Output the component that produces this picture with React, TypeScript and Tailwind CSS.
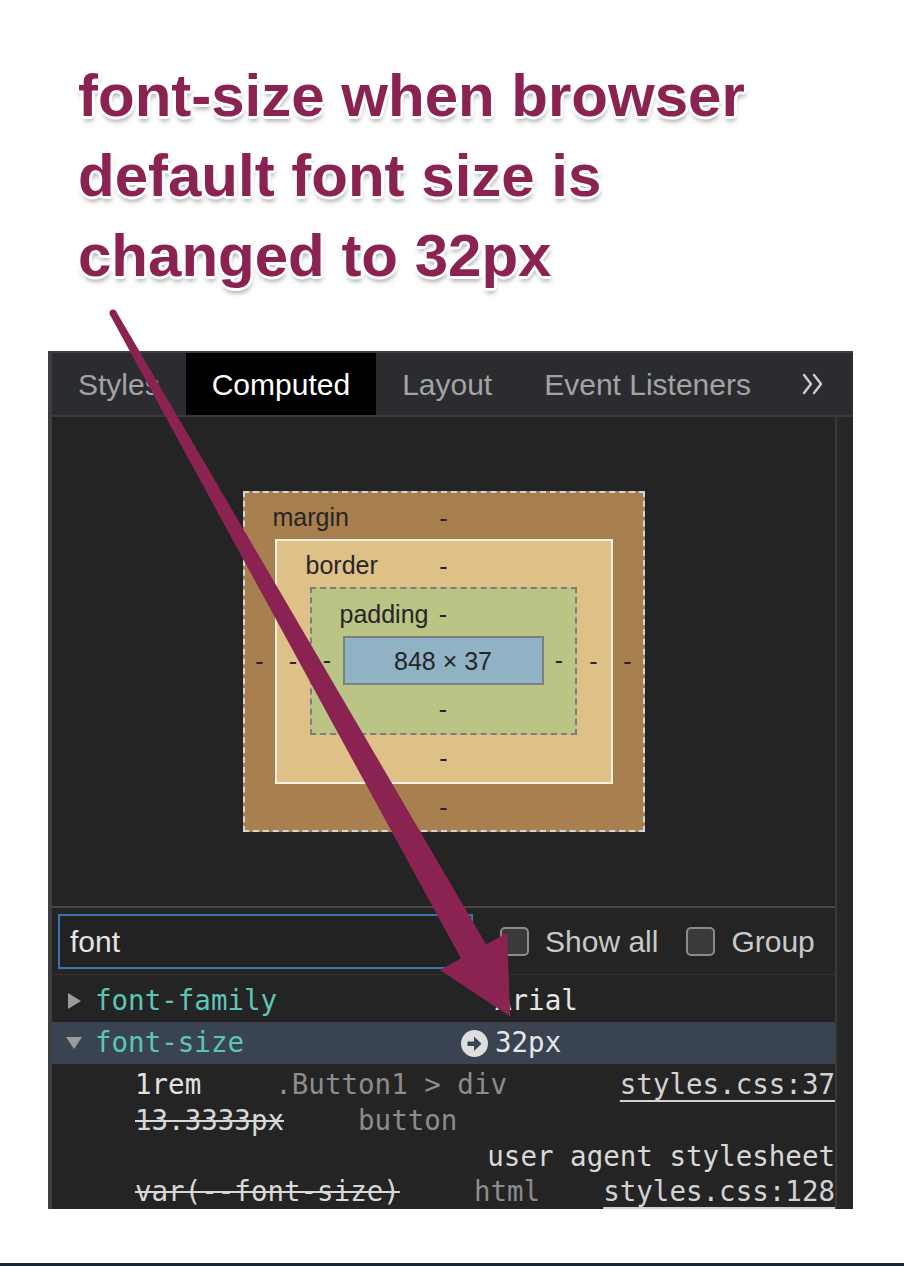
import React from "react";

const mono = "font-['DejaVu_Sans_Mono',monospace] text-[27.5px] whitespace-nowrap";

function BoxDash() {
    return <span className="text-[25px] leading-none text-[#262626]">-</span>;
}

function BoxModel() {
    return (
        // margin
        <div className="flex h-[341px] w-[402px] flex-col border-2 border-dashed border-[#cfd6de] bg-[#a8804f] font-['Liberation_Sans',Arial,sans-serif] text-[25px] text-[#262626]">
            <div className="grid h-[50px] grid-cols-[1fr_auto_1fr] items-center">
                <span className="pl-[28px]">margin</span>
                <BoxDash />
                <span />
            </div>
            <div className="-mt-[4px] flex">
                <div className="flex w-[30px] items-center justify-center"><BoxDash /></div>
                {/* border */}
                <div className="flex h-[245px] w-[338px] flex-col border-2 border-[#f4f0e6] bg-[#dfc187]">
                    <div className="grid h-[50px] grid-cols-[1fr_auto_1fr] items-center">
                        <span className="pl-[29px]">border</span>
                        <BoxDash />
                        <span />
                    </div>
                    <div className="-mt-[4px] flex">
                        <div className="flex w-[33px] items-center justify-center"><BoxDash /></div>
                        {/* padding */}
                        <div className="flex h-[148px] w-[267px] flex-col border-2 border-dashed border-[#7e7e7e] bg-[#bac485]">
                            <div className="grid h-[51px] grid-cols-[1fr_auto_1fr] items-center">
                                <span className="pl-[28px]">padding</span>
                                <BoxDash />
                                <span />
                            </div>
                            <div className="-mt-[4px] flex">
                                <div className="flex w-[31px] items-center justify-center"><BoxDash /></div>
                                <div className="flex h-[49px] w-[201px] items-center justify-center border-2 border-[#7f7f7f] bg-[#8fb2c4] pt-[2px]">
                                    848 × 37
                                </div>
                                <div className="flex flex-1 items-center justify-center"><BoxDash /></div>
                            </div>
                            <div className="flex flex-1 items-center justify-center"><BoxDash /></div>
                        </div>
                        <div className="flex flex-1 items-center justify-center"><BoxDash /></div>
                    </div>
                    <div className="flex flex-1 items-center justify-center"><BoxDash /></div>
                </div>
                <div className="flex flex-1 items-center justify-center"><BoxDash /></div>
            </div>
            <div className="flex flex-1 items-center justify-center"><BoxDash /></div>
        </div>
    );
}

function Checkbox({ label }: { label: string }) {
    return (
        <div className="flex items-center gap-[16px]">
            <span className="h-[29px] w-[29px] rounded-[5px] border-2 border-[#8b8b8b] bg-[#3a3a3a]" />
            <span className="text-[30px] text-[#c9c9c9]">{label}</span>
        </div>
    );
}

export default function App() {
    const tabs = ["Styles", "Computed", "Layout", "Event Listeners"];

    return (
        <div className="relative flex h-[1266px] w-[904px] flex-col overflow-hidden bg-white font-['Liberation_Sans',Arial,sans-serif]">
            {/* Annotation title */}
            <h1 className="pl-[78px] pt-[56px] text-[60px] font-bold leading-[80px] text-[#8a2351] [text-shadow:3px_0_0_#fff,-3px_0_0_#fff,0_3px_0_#fff,0_-3px_0_#fff,2px_2px_0_#fff,-2px_-2px_0_#fff,2px_-2px_0_#fff,-2px_2px_0_#fff,1px_5px_5px_rgba(0,0,0,0.35)]">
                font-size when browser
                <br />
                default font size is
                <br />
                changed to 32px
            </h1>

            {/* DevTools panel */}
            <div className="ml-[48px] mt-[55px] flex h-[858px] w-[805px] flex-col overflow-hidden border-l-4 border-t-2 border-[#3e3e41] bg-[#242424]">
                {/* tabs */}
                <div className="flex h-[65px] items-stretch border-b-2 border-[#3a3a3c] bg-[#2b2c2f] text-[30px]">
                    {tabs.map((t) => (
                        <div
                            key={t}
                            className={`flex items-center px-[26px] ${t === "Computed" ? "bg-black text-white" : "text-[#a3a3a3]"}`}
                        >
                            {t}
                        </div>
                    ))}
                    <div className="ml-[24px] flex items-center">
                        <svg width="24" height="24" viewBox="0 0 24 24" fill="none" stroke="#cfcfcf" strokeWidth="2.4" strokeLinecap="round" strokeLinejoin="round">
                            <path d="M3 3l7 9-7 9" />
                            <path d="M13 3l7 9-7 9" />
                        </svg>
                    </div>
                </div>

                <div className="flex flex-1">
                    <div className="flex min-w-0 flex-1 flex-col">
                        {/* box model */}
                        <div className="flex h-[489px] items-center justify-center">
                            <BoxModel />
                        </div>

                        {/* filter row */}
                        <div className="flex h-[68px] items-center border-t-2 border-[#474747] pl-[6px]">
                            <div className="flex h-[55px] w-[415px] items-center border-2 border-[#3d72b0] bg-[#222222] pl-[10px] text-[30px] text-[#e4e4e4]">
                                font
                            </div>
                            <div className="ml-[27px]">
                                <Checkbox label="Show all" />
                            </div>
                            <div className="ml-[28px]">
                                <Checkbox label="Group" />
                            </div>
                        </div>

                        {/* font-family */}
                        <div className={`flex h-[48px] items-center border-t border-[#323232] pt-[4px] ${mono}`}>
                            <div className="w-[43px] pl-[16px]">
                                <svg width="13" height="16" viewBox="0 0 13 16"><polygon points="0,0 13,8 0,16" fill="#9c9c9c" /></svg>
                            </div>
                            <span className="w-[366px] text-[#5cc5b5]">font-family</span>
                            <span className="w-[34px]" />
                            <span className="text-[#e6e6e6]">Arial</span>
                        </div>

                        {/* font-size */}
                        <div className={`flex h-[42px] items-center bg-[#3a4351] ${mono}`}>
                            <div className="w-[43px] pl-[14px]">
                                <svg width="16" height="12" viewBox="0 0 16 12"><polygon points="0,0 16,0 8,12" fill="#9c9c9c" /></svg>
                            </div>
                            <span className="w-[366px] text-[#5cc5b5]">font-size</span>
                            <span className="flex w-[34px] items-center">
                                <svg width="27" height="27" viewBox="0 0 27 27">
                                    <circle cx="13.5" cy="13.5" r="13.5" fill="#dedede" />
                                    <rect x="6.5" y="11.5" width="8" height="4.5" fill="#3a4351" />
                                    <polygon points="13,6.5 20.5,13.75 13,21" fill="#3a4351" />
                                </svg>
                            </span>
                            <span className="text-[#e6e6e6]">32px</span>
                        </div>

                        {/* trace */}
                        <div className={`flex flex-col pl-[83px] pt-[2px] leading-[36px] ${mono}`}>
                            <div className="flex h-[36px]">
                                <span className="mr-[74px] text-[#e2e2e2]">1rem</span>
                                <span className="text-[#8c8c8c]">.Button1 &gt; div</span>
                                <span className="ml-auto text-[#d2d2d2] underline decoration-2 underline-offset-[6px]">styles.css:37</span>
                            </div>
                            <div className="flex h-[36px]">
                                <span className="mr-[74px] text-[#d8d8d8] line-through decoration-2">13.3333px</span>
                                <span className="text-[#8c8c8c]">button</span>
                            </div>
                            <div className="h-[35px] text-right text-[#d8d8d8]">user agent stylesheet</div>
                            <div className="flex h-[36px]">
                                <span className="mr-[74px] shrink-0 text-[#d8d8d8] line-through decoration-2">var(--font-size)</span>
                                <span className="shrink-0 text-[#8c8c8c]">html</span>
                                <span className="ml-auto shrink-0 text-[#d2d2d2] underline decoration-2 underline-offset-[6px]">styles.css:128</span>
                            </div>
                        </div>
                    </div>
                    {/* scroll gutter */}
                    <div className="w-[18px] border-l-2 border-[#393939] bg-[#272727]" />
                </div>
            </div>

            <div className="mt-auto h-[3px] bg-[#1b2435]" />

            {/* annotation arrow */}
            <svg className="pointer-events-none absolute inset-0" width="904" height="1266" viewBox="0 0 904 1266">
                <polygon
                    points="116.05,311.28 486.1,944.4 507,933 510.3,1016.8 440,970 460.9,958.6 109.95,314.72"
                    fill="#8a2351"
                />
                <circle cx="113" cy="313" r="3.5" fill="#8a2351" />
            </svg>
        </div>
    );
}
